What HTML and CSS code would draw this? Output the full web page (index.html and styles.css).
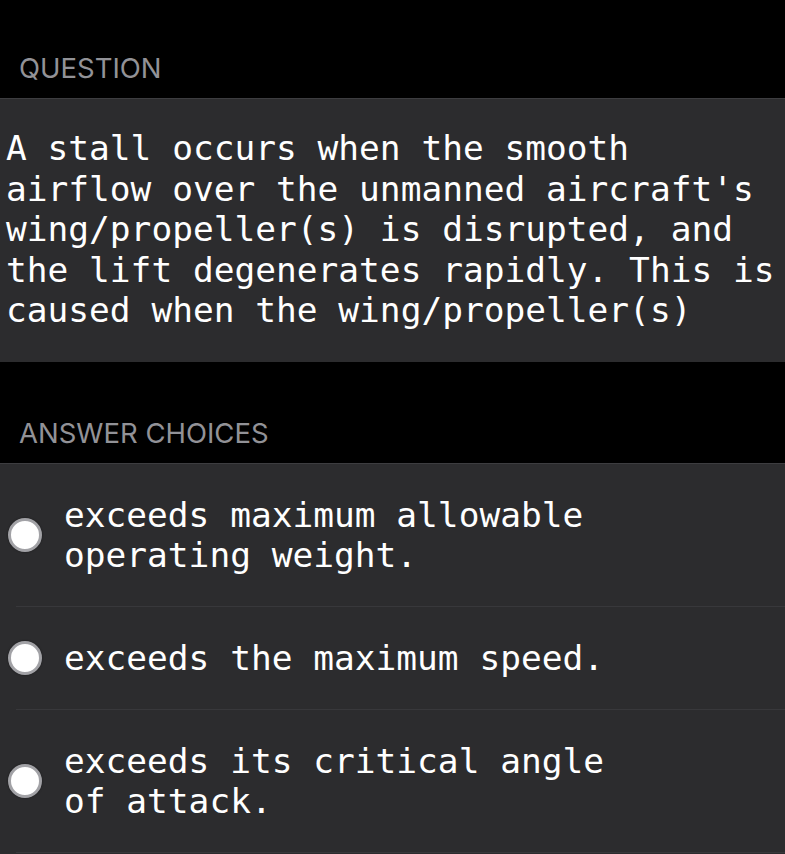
FILE: index.html
```html
<!DOCTYPE html>
<html lang="en">

<head>
  <meta charset="utf-8">
  <meta content="width=device-width, initial-scale=1.0" name="viewport">
  <title>Question</title>
  <link rel="stylesheet" href="styles.css">
</head>

<body>
  <div class="section-head">QUESTION</div>
  <div class="question">A stall occurs when the smooth airflow over the unmanned aircraft's wing/propeller(s) is disrupted, and the lift degenerates rapidly. This is caused when the wing/propeller(s)</div>
  <div class="section-head answers-head">ANSWER CHOICES</div>
  <ul class="choices">
    <li class="choice">
      <span class="radio"></span>
      <span class="choice-text">exceeds maximum allowable operating weight.</span>
    </li>
    <li class="choice">
      <span class="radio"></span>
      <span class="choice-text">exceeds the maximum speed.</span>
    </li>
    <li class="choice">
      <span class="radio"></span>
      <span class="choice-text">exceeds its critical angle of attack.</span>
    </li>
  </ul>
</body>

</html>
```

FILE: styles.css
```css
*,
*::before,
*::after {
  box-sizing: border-box;
}

body {
  margin: 0;
  background-color: #000000;
  font-family: "DejaVu Sans Mono", monospace;
}

.section-head {
  display: flex;
  align-items: flex-end;
  height: 99px;
  padding: 0 0 16px 19px;
  border-bottom: 1px solid #3d3d40;
  font-family: Inter, "Liberation Sans", sans-serif;
  font-size: 27.5px;
  line-height: 27px;
  color: #929297;
}

.answers-head {
  height: 102px;
  padding-bottom: 16px;
}

.question {
  background-color: #2c2c2e;
  color: #ffffff;
  font-size: 34.5px;
  line-height: 40.5px;
  padding: 29px 8px 31px 6px;
}

.choices {
  list-style: none;
  margin: 0;
  padding: 0;
  background-color: #2c2c2e;
  min-height: 390px;
}

/* rows are inset, the radio hangs back into the inset */
.choice {
  display: flex;
  align-items: center;
  gap: 22px;
  padding: 31px 8px 31px 0;
  margin-left: 16px;
  border-bottom: 1px solid #38383b;
}

.radio {
  flex: none;
  width: 34px;
  height: 34px;
  margin-left: -8px;
  border-radius: 50%;
  background-color: #ffffff;
  border: 3px solid #a2a2a6;
  box-shadow: 0 0 2px rgba(0, 0, 0, 0.5);
}

.choice-text {
  max-width: 560px;
  color: #ffffff;
  font-size: 34.5px;
  line-height: 40px;
}
```
